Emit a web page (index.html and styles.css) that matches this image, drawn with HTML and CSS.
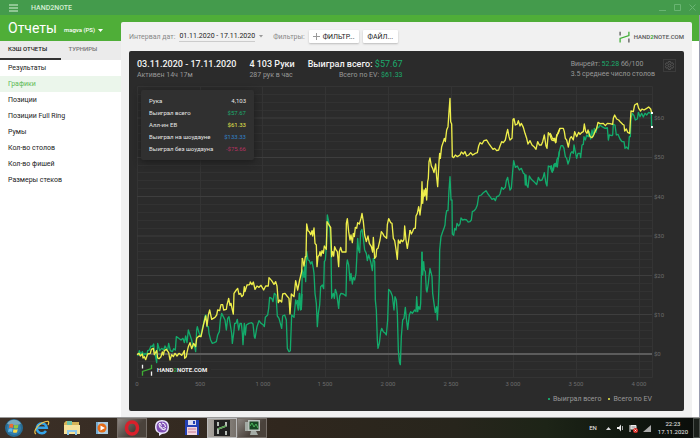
FILE: index.html
```html
<!DOCTYPE html>
<html lang="ru">
<head>
<meta charset="utf-8">
<meta name="viewport" content="width=device-width, initial-scale=1">
<title>HAND2NOTE</title>
<link rel="stylesheet" href="styles.css">
</head>
<body>
<svg width="0" height="0" class="defs" aria-hidden="true">
  <symbol id="logo" viewBox="0 0 30 32">
    <path d="M3 2v10M27 20v11" stroke="currentColor" stroke-width="3.500" fill="none"/>
    <path d="M3 31V20l24-8V2" stroke="#3fae35" stroke-width="3.500" fill="none"/>
  </symbol>
</svg>

<header class="titlebar">
  <button class="icon-btn" aria-label="Меню"><svg width="10" height="8" viewBox="0 0 10 8"><path d="M0 1h9M0 4h9M0 7h9" stroke="#d9f2d9" stroke-width="1"/></svg></button>
  <span class="app-name">HAND2NOTE</span>
  <div class="window-controls">
    <button class="icon-btn" aria-label="Свернуть"><svg width="7" height="7"><path d="M0 6.500h7" stroke="#69b472"/></svg></button>
    <button class="icon-btn" aria-label="Развернуть"><svg width="7" height="7"><path d="M.5.5h6v6h-6z" stroke="#69b472" fill="none"/></svg></button>
    <button class="icon-btn" aria-label="Закрыть"><svg width="7" height="7"><path d="M.5.5l6 6M6.500.5l-6 6" stroke="#69b472"/></svg></button>
  </div>
</header>

<div class="workspace">
  <aside class="sidebar">
    <div class="heading">
      <h1>Отчеты</h1>
      <button class="account">magva (PS) <svg width="5" height="3"><path d="M0 0h5L2.500 3z" fill="#fff"/></svg></button>
    </div>
    <div class="tabs">
      <button class="tab active">КЭШ ОТЧЕТЫ</button>
      <button class="tab">ТУРНИРЫ</button>
    </div>
    <nav class="menu">
      <a href="#">Результаты</a>
      <a href="#" class="active">Графики</a>
      <a href="#">Позиции</a>
      <a href="#">Позиции Full Ring</a>
      <a href="#">Румы</a>
      <a href="#">Кол-во столов</a>
      <a href="#">Кол-во фишей</a>
      <a href="#">Размеры стеков</a>
    </nav>
  </aside>

  <main class="content">
    <div class="toolbar">
      <span class="label">Интервал дат:</span>
      <button class="range"><span>01.11.2020 - 17.11.2020</span><svg width="4" height="3"><path d="M0 0h4L2 2.500z" fill="#999"/></svg></button>
      <span class="label filters">Фильтры:</span>
      <button class="btn"><svg width="7" height="7"><path d="M3.500 0v7M0 3.500h7" stroke="#999"/></svg>ФИЛЬТР...</button>
      <button class="btn file">ФАЙЛ...</button>
      <div class="brand"><svg width="11" height="12"><use href="#logo"/></svg><span>HAND<b>2</b>NOTE.COM</span></div>
    </div>

    <section class="panel">
      <div class="stats">
        <div><h2>03.11.2020 - 17.11.2020</h2><p>Активен 14ч 17м</p></div>
        <div><h2>4 103 Руки</h2><p>287 рук в час</p></div>
        <div class="won"><h2>Выиграл всего: <span class="gain">$57.67</span></h2><p>Всего по EV: <span class="gain">$61.33</span></p></div>
        <div class="rate"><p>Винрейт: <span class="gain">52.28</span> бб/100</p><p>3.5 среднее число столов</p></div>
        <button class="settings" aria-label="Настройки"><svg width="9" height="9" viewBox="0 0 24 24" fill="none" stroke="#606060" stroke-width="2.200"><circle cx="12" cy="12" r="4"/><path d="M9.500 1.500h5l.8 3 2.200 1.200 3-.8 2.500 4.200-2.200 2.300v1.200l2.200 2.300-2.500 4.200-3-.8-2.200 1.200-.8 3h-5l-.8-3-2.200-1.200-3 .8L1 14.900l2.200-2.300v-1.200L1 9.100l2.500-4.200 3 .8 2.200-1.200z"/></svg></button>
      </div>

      <div class="chart">
        <svg class="plot" viewBox="129 84 555 307" role="img" aria-label="График выигрыша">
          <path class="minor" d="M137 94.500H652M137 102.500H652M137 110.500H652M137 125.500H652M137 133.500H652M137 141.500H652M137 149.500H652M137 165.500H652M137 172.500H652M137 180.500H652M137 188.500H652M137 204.500H652M137 212.500H652M137 220.500H652M137 228.500H652M137 243.500H652M137 251.500H652M137 259.500H652M137 267.500H652M137 283.500H652M137 291.500H652M137 299.500H652M137 306.500H652M137 322.500H652M137 330.500H652M137 338.500H652M137 346.500H652M137 361.500H652M137 369.500H652"/>
          <path class="frame" d="M137.500 86.500H652.500V377.500H137.500zM200.500 86V378M262.500 86V378M325.500 86V378M388.500 86V378M451.500 86V378M513.500 86V378M576.500 86V378M639.500 86V378"/>
          <path class="major" d="M137 118H652M137 157.500H652M137 196.500H652M137 236H652M137 275.500H652M137 314.500H652"/>
          <path class="zero" d="M137 354H652"/>

          <g class="series total" transform="scale(.333333)">
            <polyline transform="translate(375 540)" points="36,524 40,525 43,512 48,524 52,515 56,526 60,520 66,524 68,512 73,510 78,498 82,500 86,492 89,520 92,530 95,548 98,490 104,512 110,505 116,510 120,498 124,505 128,510 131,490 136,512 142,515 146,506 151,510 154,470 160,474 168,480 174,475 178,488 182,468 186,488 190,450 195,465 200,480 204,500 208,495 212,515 215,450 217,440 222,458 227,470 232,445 236,430 240,408 243,405 246,440 250,440 252,460 257,480 262,490 268,488 274,485 278,465 283,455 286,420 290,400 296,412 300,420 304,450 308,415 312,410 316,435 320,460 322,490 326,460 329,430 333,430 337,418 341,450 345,430 349,430 352,460 354,494 358,430 361,465 364,435 372,430 380,428 384,432 388,470 390,475 396,440 402,422 408,430 416,436 418,440 421,412 428,405 431,385 434,352 440,355 444,365 448,340 453,345 457,408 462,415 466,430 470,445 473,408 479,405 484,420 487,505 492,515 496,512 500,405 507,412 512,360 517,375 520,390 523,340 529,388 531,342"/>
            <polyline transform="translate(840 570)" points="52,330 56,358 59,310 62,360 64,355 67,240 72,262 74,225 77,275 80,184 84,210 88,212 92,222 96,215 100,235 102,250 105,310 109,340 112,410 115,370 119,345 122,290 127,285 131,296 133,215 136,210 139,170 142,75 146,95 150,120 153,180 155,325 160,310 163,325 166,298 170,310 176,355 179,318 183,310 190,312 198,318 200,225 202,210 206,225 210,272 213,250 217,282 220,262 224,270 228,250 230,210 233,145 236,180 239,188 242,125 246,118 250,145 254,180 259,190 262,212 266,195 272,215 277,242 280,205 284,215 286,330 289,360 292,450 294,475 298,460 302,425 305,415 310,425 316,430 319,435 323,390 326,298 332,305 337,318 342,360 345,320 349,330 352,370 355,480 358,515 361,524 364,440 368,390 372,385 376,352 379,385 383,418 388,375 392,365 397,370 404,360 408,365 410,320 413,365 416,350 420,358 422,340 426,185"/>
            <polyline transform="translate(1230 270)" points="36,485 38,555 41,515 43,540 46,545 49,600 51,606 55,580 57,560 60,535 66,560 68,610 72,640 76,668 80,650 82,690 85,640 88,560 89,480 93,440 98,425 102,415 105,405 107,380 110,362 114,362 117,300 120,260 123,330 126,330 127,432 131,436 134,415 138,420 141,400 146,408 150,402 153,384 158,390 164,388 170,390 174,396 180,395 184,390 187,365 193,362 198,355 202,345 206,318 214,315 220,308 228,302 234,312 240,320 246,328 252,325 256,332 260,320 266,318 270,312 275,292 280,298 286,292 289,272 293,262 297,285 300,300 304,295 308,245 311,212 316,232 322,228 328,240 334,235 340,250 344,252 346,285 348,255 350,285 354,292 358,258 364,268 372,275 380,284 385,262 390,272 396,270 400,260 403,248 408,280 411,288 415,228 420,230 426,245 430,240 434,222 438,230 441,208 446,200 448,185"/>
            <polyline transform="translate(1650 255)" points="0,245 4,242 7,262 12,238 18,235 22,246 25,220 28,200 33,182 38,182 42,190 46,215 50,220 54,237 58,225 62,205 66,200 70,205 72,180 76,200 80,220 84,205 90,205 92,218 96,180 100,178 102,155 106,165 110,150 115,155 118,140 122,162 126,135 130,155 133,130 138,142 142,125 146,128 150,120 156,125 165,130 172,128 175,165 178,150 186,152 188,150 190,118 195,120 199,150 204,148 210,162 216,170 222,170 225,190 229,186 235,192 238,155 241,155 243,100 247,85 252,92 256,105 262,102 265,82 270,95 275,85 280,96 285,85 290,90 296,82 302,85 304,90 305,127"/>
          </g>
          <g class="series ev" transform="scale(.333333)">
            <polyline transform="translate(375 540)" points="36,524 42,520 46,528 52,522 54,534 58,530 62,539 68,522 76,520 79,508 85,505 88,524 95,512 98,534 102,536 108,530 112,516 115,525 118,512 124,508 131,518 135,540 140,524 145,530 150,520 156,528 162,520 170,526 174,520 178,512 179,535 184,530 186,518 190,500 195,488 200,506 206,490 212,500 215,475 222,468 228,470 236,432 242,408 246,438 250,405 254,390 260,418 270,412 275,405 278,390 284,392 288,374 293,374 296,390 304,388 306,375 311,355 315,376 318,370 321,385 325,402 327,340 334,330 338,325 342,343 347,340 350,350 355,345 358,320 360,335 366,315 374,314 376,306 381,314 385,306 390,328 396,318 402,322 408,316 416,330 422,318 430,318 432,293 440,302 447,313 452,305 456,318 460,368 464,360 470,366 473,342 480,340 486,348 492,355 495,402 499,342 507,350 512,302 518,330 524,300 530,275 532,234"/>
            <polyline transform="translate(840 570)" points="67,204 72,228 76,200 78,200 80,102 84,122 88,125 92,134 96,122 98,138 102,114 105,160 109,165 111,230 114,200 118,195 120,185 123,198 126,182 130,190 133,168 139,178 141,95 147,105 152,112 155,200 158,185 161,198 164,170 168,180 172,185 176,230 178,185 182,172 186,186 198,186 199,100 202,86 206,125 210,150 213,135 217,158 220,130 223,140 226,112 230,115 233,98 238,102 243,85 246,70 250,95 254,135 259,155 264,138 268,160 274,170 278,186 280,142 284,205 288,200 290,178 294,175 300,150 304,125 308,130 312,138 320,145 322,104 326,86 332,98 336,100 340,145 344,152 348,178 352,208 355,150 360,160 363,150 368,155 372,148 374,108 378,150 382,175 386,150 390,120"/>
            <polyline transform="translate(1230 270)" points="0,420 4,432 8,424 12,415 16,415 18,378 22,370 26,350 30,375 34,340 36,275 38,340 42,300 44,318 47,295 50,330 53,275 55,265 57,215 60,204 64,228 68,235 72,248 75,232 77,222 80,262 83,290 87,215 89,190 91,205 95,170 100,155 103,145 106,155 110,120 114,110 117,65 120,25 122,95 125,102 127,200 131,203 136,195 142,200 150,195 154,186 160,192 165,185 170,198 176,195 182,188 188,195 196,190 202,188 206,168 210,158 216,162 222,152 230,150 236,160 243,170 249,178 254,175 260,182 266,180 270,168 275,155 280,158 286,150 290,130 293,118 297,140 300,150 306,145 309,88 312,86 316,105 322,102 325,92 330,108 334,100 340,112 345,130 350,145 354,162 360,152 366,165 372,170 378,178 383,155 388,165 394,165 398,155 403,135 408,168 411,175 415,128 420,135 425,150 430,152 434,145 437,158 440,140 444,128 450,115"/>
            <polyline transform="translate(1650 255)" points="0,144 4,152 8,162 12,160 17,173 20,150 25,145 30,130 40,130 43,140 46,160 50,165 55,186 60,160 64,155 70,165 74,140 80,155 86,142 90,148 96,142 100,140 103,117 107,140 111,145 114,135 120,155 126,158 131,150 135,140 140,130 144,112 150,116 160,115 166,122 172,115 180,116 188,118 190,100 194,90 200,102 206,105 212,112 218,118 222,120 224,138 229,132 233,142 239,145 241,110 243,78 250,80 254,60 262,55 266,70 272,78 276,72 282,75 290,70 296,66 302,72 305,84"/>
          </g>
          <path d="M651 112h2v2h-2zM651 126h2v2h-2z" fill="#fff"/>

          <g class="axis">
            <text x="654" y="120">$60</text><text x="654" y="159">$50</text><text x="654" y="199">$40</text><text x="654" y="238">$30</text><text x="654" y="278">$20</text><text x="654" y="317">$10</text><text x="654" y="356">$0</text>
          </g>
          <g class="axis across">
            <text x="137" y="386">0</text><text x="200" y="386">500</text><text x="263" y="386">1 000</text><text x="325" y="386">1 500</text><text x="388" y="386">2 000</text><text x="451" y="386">2 500</text><text x="513" y="386">3 000</text><text x="576" y="386">3 500</text><text x="639" y="386">4 000</text>
          </g>
          <path d="M139 364h72v12h-72z" fill="#2b2b2b"/>
          <g class="watermark"><use href="#logo" x="141" y="364" width="12" height="12"/><text x="157" y="372">HAND<tspan fill="#2c9c3c">2</tspan>NOTE.COM</text></g>
        </svg>
        <dl class="tooltip">
          <div><dt>Рука</dt><dd>4,103</dd></div>
          <div><dt>Выиграл всего</dt><dd class="gain">$57.67</dd></div>
          <div><dt>Алл-ин ЕВ</dt><dd class="yellow">$61.33</dd></div>
          <div><dt>Выиграл на шоудауне</dt><dd class="blue">$133.33</dd></div>
          <div><dt>Выиграл без шоудауна</dt><dd class="red">-$75.66</dd></div>
        </dl>
      </div>
      <div class="legend"><span class="key total-key">Выиграл всего</span><span class="key ev-key">Всего по EV</span></div>
    </section>
  </main>
</div>

<footer class="taskbar">
  <div class="apps">
    <button class="task" aria-label="Пуск"><svg width="20" height="20" viewBox="0 0 20 20"><circle cx="10" cy="10" r="9" fill="#286b91"/><circle cx="10" cy="10" r="7" fill="#327fae"/><path d="M3 6a8 8 0 0 1 14 0Q10 8 3 6" fill="#79a9be"/><path d="M5.500 6.500q2-1.500 4 0l-.6 3.500q-2-1-4 0z" fill="#ed6d35"/><path d="M10.300 6.800q2 1 4.200-.2l-.6 3.500q-2 1-4.200 0z" fill="#91c83e"/><path d="M4.700 10.800q2-1 4 0l-.6 3.200q-2-1-4 .2z" fill="#65b9ea"/><path d="M9.500 11q2 1 4.200 0l-.6 3.200q-2 1.200-4.200 0z" fill="#fad847"/></svg></button>
    <button class="task" aria-label="Internet Explorer"><svg width="18" height="18" viewBox="0 0 18 18" fill="none"><path d="M13 12a5 5 0 1 1 .8-3.200H4.500" stroke="#35a4e8" stroke-width="2.500"/><path d="M3 15C0 14 3 7 9 4s8-2 6 2" stroke="#efc64c" stroke-width="1.200"/></svg></button>
    <button class="task" aria-label="Проводник"><svg width="18" height="18" viewBox="0 0 18 18"><path d="M1 4l2-2h5l1 1h7v11H1z" fill="#d6b457"/><path d="M4 2h5v4H4z" fill="#6fc2a8"/><path d="M1 6h16v9H1z" fill="#f6e29a"/><path d="M4 16v-5h10v5h-2v-3H6v3z" fill="#8dc8ea"/></svg></button>
    <button class="task" aria-label="Проигрыватель"><svg width="18" height="18" viewBox="0 0 18 18"><path d="M3 3h12v12H3z" fill="#76acd2"/><path d="M5 3h10v12H5z" fill="#abcbe0"/><circle cx="9" cy="9" r="4.500" fill="#e66b18"/><path d="M7.500 6.500l4.500 2.500-4.500 2.500z" fill="#fff"/></svg></button>
    <button class="task open" aria-label="Opera"><svg width="18" height="18" viewBox="0 0 18 18"><ellipse cx="9" cy="9" rx="5.500" ry="6" fill="none" stroke="#d9202b" stroke-width="3.500"/></svg></button>
    <button class="task" aria-label="Viber"><svg width="18" height="18" viewBox="0 0 18 18"><path d="M9 1q7 0 7 7t-7 7l-3 2v-3q-4-1-4-6 0-7 7-7z" fill="#eee8ff"/><path d="M9 2.500q5.500 0 5.500 5.500T9 13.500 3.500 8 9 2.500" fill="#8050b5"/><path d="M6 5q0 5 5.500 6l1-1.500-2-1-1 .8-2-2 .8-1L7 4zM9 4q3.500 0 3.500 4" fill="none" stroke="#fff"/></svg></button>
    <button class="task" aria-label="Total Commander"><svg width="18" height="18" viewBox="0 0 18 18"><path d="M2 1h14v15H2z" fill="#2340b5"/><path d="M5 1h8v5H5z" fill="#d7daf0"/><path d="M10 2h2v3h-2z" fill="#2340b5"/><path d="M4 8h10v8H4z" fill="#f0d5df"/><path d="M5 10h8M5 13h8" stroke="#c87991"/></svg></button>
    <button class="task current" aria-label="Hand2Note"><svg width="16" height="16" viewBox="0 0 16 16"><path d="M0 0h16v16H0z" fill="#202020"/><path d="M4 2v4M12 11v4M4 14V9l8-3V2" stroke="#e6eee6" stroke-width="1.500" fill="none"/><path d="M4 9l8-3" stroke="#579e50" stroke-width="1.500"/></svg></button>
    <button class="task open" aria-label="Монитор"><svg width="20" height="18" viewBox="0 0 20 18"><path d="M3 3h10v9H3z" fill="#a3aaa4"/><path d="M6 1h12v11H6z" fill="#bac2bc"/><path d="M7.500 2.500h9v8h-9z" fill="#174723"/><path d="M8 7l2-3 2 4 2-3 2 4" fill="none" stroke="#4cb45c"/><path d="M9 12h5l2 4H8z" fill="#a5aca6"/></svg></button>
  </div>
  <div class="tray">
    <span class="lang">EN</span>
    <svg width="5" height="3"><path d="M0 3h5L2.500 0z" fill="#ddd"/></svg>
    <svg width="8" height="8"><path d="M1 3h2l2-2.500v7L3 5H1z" fill="#eee"/><path d="M6.500 2v4" stroke="#aaa"/></svg>
    <svg width="9" height="9"><path d="M1 1v7M2 1.500h5V5H2z" stroke="#eee" fill="#bbb"/><circle cx="6.500" cy="6.500" r="2.500" fill="#d62b24"/><path d="M5.500 5.500l2 2M7.500 5.500l-2 2" stroke="#fff" stroke-width=".7"/></svg>
    <svg width="8" height="7"><path d="M0 7h8V0z" fill="#aaa"/></svg>
    <time>22:23<br>17.11.2020</time>
    <button class="show-desktop" aria-label="Показать рабочий стол"></button>
  </div>
</footer>
</body>
</html>
```

FILE: styles.css
```css
* {
  box-sizing: border-box;
}

body {
  margin: 0;
  min-height: 100vh;
  display: flex;
  flex-direction: column;
  font: 7px/10px Roboto, "Liberation Sans", sans-serif;
  color: #222;
  background: #fff;
}

button {
  font: inherit;
  color: inherit;
  border: 0;
  padding: 0;
  background: none;
}

svg {
  display: block;
  flex: none;
}

a {
  color: inherit;
  text-decoration: none;
}

h1, h2, p, dl, dd {
  margin: 0;
}

.defs {
  position: absolute;
}

.titlebar {
  display: flex;
  align-items: center;
  height: 15px;
  padding: 0 4px 0 9px;
  background: #449b4c;
}

.app-name {
  margin-left: 12px;
  color: #d5efd5;
  font-weight: 500;
}

.window-controls {
  display: flex;
  gap: 8px;
  margin-left: auto;
}

.workspace {
  flex: 1;
  display: grid;
  grid-template-columns: 121px 1fr;
  background: linear-gradient(#4fae38 26px, #fff 26px);
  border-right: 1px solid #9a9db0;
}

.heading {
  display: flex;
  align-items: center;
  gap: 7px;
  height: 26px;
  padding-left: 8px;
  color: #fff;
}

h1 {
  font-size: 14px;
  font-weight: 400;
}

.account {
  display: flex;
  align-items: center;
  gap: 3px;
  padding-top: 4px;
  font-size: 6px;
  font-weight: 500;
}

.tabs {
  display: grid;
  grid-template-columns: 1fr 1fr;
  height: 19px;
  background: #ebebeb;
}

.tab {
  padding: 0 0 2px 8px;
  font-size: 6px;
  font-weight: 500;
  text-align: left;
  color: #777;
  border-bottom: 2px solid transparent;
}

.tab.active {
  color: #222;
  border-color: #333;
}

.menu a {
  display: block;
  padding-left: 8px;
  line-height: 16px;
}

.menu .active {
  color: #5cba55;
  background: #ebf6eb;
}

.content {
  margin: 7px 7px 0 0;
  padding: 0 8px 6px;
  border-radius: 2px 2px 0 0;
  background: #f1f1f1;
}

.toolbar {
  display: flex;
  align-items: center;
  height: 29px;
}

.label {
  color: #888;
}

.filters {
  margin: 0 4px 0 10px;
}

.range {
  display: flex;
  align-items: center;
  gap: 4px;
  margin-left: 4px;
}

.range span {
  border-bottom: 1px solid #ccc;
}

.btn {
  display: flex;
  align-items: center;
  gap: 3px;
  height: 13px;
  padding: 0 4px;
  border-radius: 1px;
  background: #fff;
  box-shadow: 0 1px 2px #bbb;
}

.file {
  margin-left: 4px;
  padding: 0 5px;
}

.brand {
  display: flex;
  align-items: center;
  gap: 4px;
  margin-left: auto;
  font-size: 6px;
  font-weight: 500;
  color: #555;
}

.brand b {
  color: #39a935;
}

.panel {
  border-radius: 2px;
  background: #2b2b2b;
  color: #999;
}

.stats {
  display: flex;
  gap: 13px;
  height: 33px;
  padding: 8px 8px 0;
}

h2 {
  font-size: 9px;
  font-weight: 500;
  line-height: 11px;
  color: #f3f3f3;
}

h2 .gain {
  font-weight: 400;
}

.gain {
  color: #1cab6d;
}

.won {
  text-align: right;
}

.rate {
  margin-left: auto;
}

.settings {
  display: grid;
  place-items: center;
  width: 13px;
  height: 13px;
  margin-left: -5px;
  border: 1px solid #3b3b3b;
}

.chart {
  position: relative;
}

.plot {
  width: 100%;
  height: auto;
}

.minor {
  stroke: #323232;
}

.major {
  stroke: #3e3e3e;
}

.frame {
  fill: none;
  stroke: #343434;
}

.zero {
  stroke: #5c5c5c;
  stroke-width: 2;
}

.series {
  fill: none;
  stroke-width: 4;
  stroke-linejoin: round;
}

.total {
  stroke: #13ab6b;
}

.ev {
  stroke: #eeee4b;
}

.axis {
  font-size: 6px;
  fill: #6c6c6c;
}

.across {
  text-anchor: middle;
}

.watermark {
  font: 700 6px Roboto, sans-serif;
  fill: #f2f2f2;
  color: #f2f2f2;
}

.tooltip {
  position: absolute;
  top: 6px;
  left: 12px;
  width: 113px;
  padding: 5px 8px;
  font-size: 6px;
  color: #e6e6e6;
  background: #303030;
  border-radius: 2px;
  box-shadow: 0 2px 7px #1c1c1c;
}

.tooltip div {
  display: flex;
  justify-content: space-between;
  line-height: 12px;
}

.tooltip .gain {
  color: #1cab6d;
}

.yellow {
  color: #e6e64c;
}

.blue {
  color: #3181c7;
}

.red {
  color: #b43260;
}

.legend {
  display: flex;
  justify-content: flex-end;
  gap: 7px;
  padding: 3px 32px 7px 0;
}

.key {
  display: flex;
  align-items: center;
  gap: 3px;
}

.key::before {
  content: "";
  width: 2px;
  height: 2px;
  border-radius: 1px;
}

.total-key::before {
  background: #13c47b;
}

.ev-key::before {
  background: #eeee4b;
}

.taskbar {
  display: flex;
  justify-content: space-between;
  height: 21px;
  border-top: 1px solid #999;
  background: linear-gradient(90deg, #3c3027, #30271e 40%, #27251c 65%, #1d2417 78%, #10170f 90%, #0a0d0a);
}

.apps {
  display: flex;
}

.task {
  display: grid;
  place-items: center;
  width: 30px;
}

.task:first-child {
  width: 27px;
}

.open,
.current {
  border: 1px solid #77706a;
  background: linear-gradient(135deg, #8b8580, #4a423b 60%);
}

.current {
  background: linear-gradient(90deg, #aaa6a0, #77716b);
  border-color: #bbb;
}

.tray {
  display: flex;
  align-items: center;
  gap: 5px;
  font-size: 6px;
  line-height: 8px;
  color: #eee;
}

.lang {
  margin-right: 4px;
}

.tray time {
  margin-left: 2px;
  text-align: center;
}

.show-desktop {
  align-self: stretch;
  width: 7px;
  border: 1px solid #4b504b;
  background: #1b201b;
}
```
